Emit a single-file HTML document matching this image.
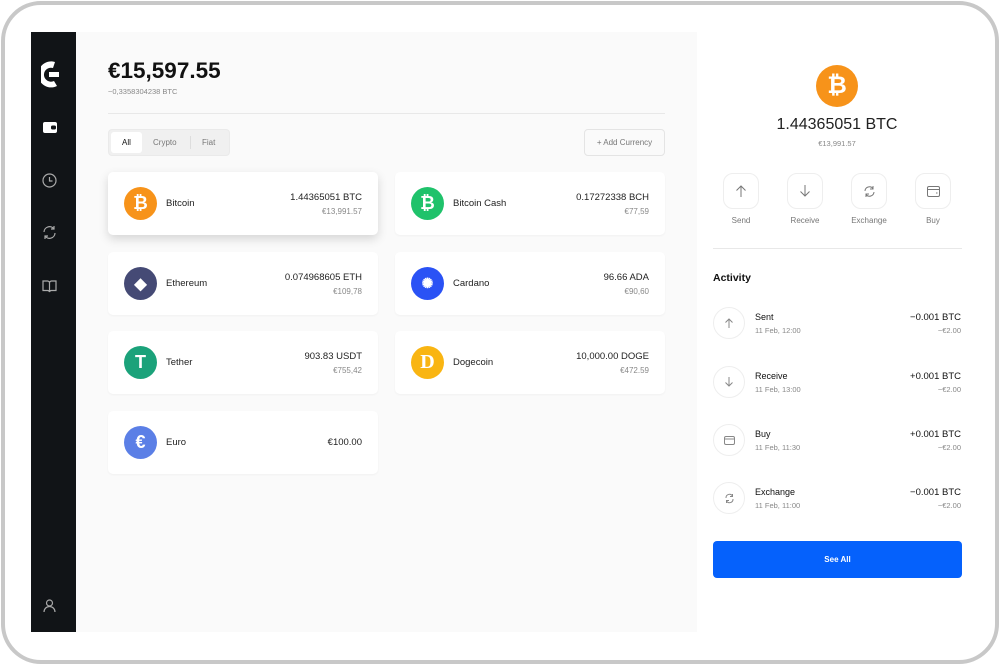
<!DOCTYPE html>
<html><head><meta charset="utf-8"><style>
*{margin:0;padding:0;box-sizing:border-box}
body{width:1000px;height:665px;background:#fff;font-family:"Liberation Sans",sans-serif;position:relative;overflow:hidden;color:#111}
.frame{position:absolute;left:1px;top:1px;width:998px;height:663px;border:4px solid #c8c8c8;border-radius:40px;background:#fff}
.side{position:absolute;left:31px;top:32px;width:45px;height:600px;background:#111417}
.main{position:absolute;left:76px;top:32px;width:621px;height:600px;background:#fafafa}
.right{position:absolute;left:697px;top:32px;width:272px;height:600px;background:#fff}
.a{position:absolute}
.card{position:absolute;width:270px;height:63px;background:#fff;border-radius:5px;box-shadow:0 1px 2px rgba(0,0,0,.04)}
.card.sel{box-shadow:0 4px 10px rgba(0,0,0,.15)}
.ic{position:absolute;left:16px;top:15px;width:33px;height:33px;border-radius:50%;color:#fff;font-weight:bold;font-size:18px;display:flex;align-items:center;justify-content:center}
.nm{position:absolute;left:58px;top:26px;font-size:9.5px;color:#222}
.v1{position:absolute;right:16px;top:20px;font-size:9.5px;text-align:right;color:#222}
.v2{position:absolute;right:16px;top:35px;font-size:8px;color:#888;text-align:right}
.btn{position:absolute;width:36px;height:36px;border:1px solid #eee;border-radius:10px;display:flex;align-items:center;justify-content:center}
.bl{position:absolute;font-size:8px;color:#777;width:60px;text-align:center}
.act .c{position:absolute;left:16px;width:32px;height:32px;border:1px solid #eee;border-radius:50%;display:flex;align-items:center;justify-content:center}
</style></head><body>
<div class="frame"></div>
<div class="side">
<svg class="a" style="left:10px;top:28px" width="18" height="30" viewBox="0 0 18 30"><path d="M14 2 A13 13 0 1 0 16 26 L13 21 A7 7 0 1 1 12 8 Z" fill="#fff"/><rect x="8" y="12" width="10" height="5" fill="#fff"/></svg>
<svg class="a" style="left:12px;top:90px" width="14" height="11"><rect x="0" y="0" width="14" height="11" rx="2" fill="#fff"/><rect x="8" y="3.5" width="5" height="4" rx="1.5" fill="#111417"/></svg>
<svg class="a" style="left:11px;top:141px" width="15" height="15" fill="none" stroke="#aaa" stroke-width="1.2"><circle cx="7.5" cy="7.5" r="6.5"/><path d="M7.5 4v4h3"/></svg>
<svg class="a" style="left:11px;top:193px" width="15" height="15" fill="none" stroke="#aaa" stroke-width="1.2"><path d="M2 7a5.5 5.5 0 0 1 10-3M13 8a5.5 5.5 0 0 1-10 3M12 1v3h-3M3 14v-3h3"/></svg>
<svg class="a" style="left:11px;top:248px" width="15" height="13" fill="none" stroke="#aaa" stroke-width="1.2"><path d="M1 1h4.5a2 2 0 0 1 2 2v9a2 2 0 0 0-2-1.5H1zM14 1H9.5a2 2 0 0 0-2 2v9a2 2 0 0 1 2-1.5H14z"/></svg>
<svg class="a" style="left:12px;top:567px" width="13" height="14" fill="none" stroke="#aaa" stroke-width="1.2"><circle cx="6.5" cy="4" r="3"/><path d="M1 13a5.5 5.5 0 0 1 11 0"/></svg>
</div>
<div class="main">
<div class="a" style="left:32px;top:26px;font-size:22.5px;font-weight:bold">€15,597.55</div>
<div class="a" style="left:32px;top:55px;font-size:7.5px;color:#888">~0,3358304238 BTC</div>
<div class="a" style="left:32px;top:81px;width:557px;height:1px;background:#e8e8e8"></div>
<div class="a" style="left:32px;top:97px;width:122px;height:27px;background:#f0f0f0;border-radius:4px;border:1px solid #eaeaea"></div>
<div class="a" style="left:35px;top:100px;width:31px;height:21px;background:#fff;border-radius:3px;font-size:8px;display:flex;align-items:center;justify-content:center">All</div>
<div class="a" style="left:77px;top:106px;font-size:8px;color:#777">Crypto</div>
<div class="a" style="left:114px;top:104px;width:1px;height:13px;background:#ddd"></div>
<div class="a" style="left:126px;top:106px;font-size:8px;color:#777">Fiat</div>
<div class="a" style="left:508px;top:97px;width:81px;height:27px;border:1px solid #e4e4e4;border-radius:4px;font-size:8px;color:#777;display:flex;align-items:center;justify-content:center">+ Add Currency</div>
</div>
<div class="card sel" style="left:108px;top:172px"><div class="ic" style="background:#f7931a">₿</div><div class="nm">Bitcoin</div><div class="v1">1.44365051 BTC</div><div class="v2">€13,991.57</div></div>
<div class="card" style="left:395px;top:172px"><div class="ic" style="background:#1fc26b">₿</div><div class="nm">Bitcoin Cash</div><div class="v1">0.17272338 BCH</div><div class="v2">€77,59</div></div>
<div class="card" style="left:108px;top:252px"><div class="ic" style="background:#454a75;font-size:16px">◆</div><div class="nm">Ethereum</div><div class="v1">0.074968605 ETH</div><div class="v2">€109,78</div></div>
<div class="card" style="left:395px;top:252px"><div class="ic" style="background:#2a52f5;font-size:14px">✺</div><div class="nm">Cardano</div><div class="v1">96.66 ADA</div><div class="v2">€90,60</div></div>
<div class="card" style="left:108px;top:331px"><div class="ic" style="background:#1ba27a">T</div><div class="nm">Tether</div><div class="v1">903.83 USDT</div><div class="v2">€755,42</div></div>
<div class="card" style="left:395px;top:331px"><div class="ic" style="background:#f9b512;font-family:'Liberation Serif',serif;font-size:20px">D</div><div class="nm">Dogecoin</div><div class="v1">10,000.00 DOGE</div><div class="v2">€472.59</div></div>
<div class="card" style="left:108px;top:411px"><div class="ic" style="background:#5b7fe6">€</div><div class="nm">Euro</div><div class="v1" style="top:26px">€100.00</div></div>
<div class="right">
<div class="a" style="left:119px;top:33px;width:42px;height:42px;border-radius:50%;background:#f7931a;color:#fff;font-weight:bold;font-size:24px;display:flex;align-items:center;justify-content:center">₿</div>
<div class="a" style="left:0;width:280px;top:84px;text-align:center;font-size:16px;color:#222">1.44365051 BTC</div>
<div class="a" style="left:0;width:280px;top:107px;text-align:center;font-size:7.5px;color:#888">€13,991.57</div>
<div class="btn" style="left:26px;top:141px"><svg width="12" height="12" fill="none" stroke="#777" stroke-width="1"><path d="M6 12V1M1.5 5.5 6 1l4.5 4.5"/></svg></div>
<div class="btn" style="left:90px;top:141px"><svg width="12" height="12" fill="none" stroke="#777" stroke-width="1"><path d="M6 0v11M1.5 6.5 6 11l4.5-4.5"/></svg></div>
<div class="btn" style="left:154px;top:141px"><svg width="13" height="13" fill="none" stroke="#777" stroke-width="1"><path d="M2 6a4.5 4.5 0 0 1 8-2.5M11 7a4.5 4.5 0 0 1-8 2.5M10 1v3h-3M3 12V9h3"/></svg></div>
<div class="btn" style="left:218px;top:141px"><svg width="13" height="11" fill="none" stroke="#777" stroke-width="1"><rect x=".5" y=".5" width="12" height="10" rx="1.5"/><path d="M.5 3.5h12M9 7h1.5"/></svg></div>
<div class="bl" style="left:14px;top:184px">Send</div>
<div class="bl" style="left:78px;top:184px">Receive</div>
<div class="bl" style="left:142px;top:184px">Exchange</div>
<div class="bl" style="left:206px;top:184px">Buy</div>
<div class="a" style="left:16px;top:216px;width:249px;height:1px;background:#e8e8e8"></div>
<div class="a" style="left:16px;top:240px;font-size:10.5px;font-weight:bold">Activity</div>
<div class="act">
<div class="c" style="top:275px"><svg width="10" height="10" fill="none" stroke="#888"><path d="M5 10V1M1.5 4.5 5 1l3.5 3.5"/></svg></div>
<div class="a" style="left:58px;top:280px;font-size:9px">Sent</div><div class="a" style="left:58px;top:294px;font-size:7.5px;color:#888">11 Feb, 12:00</div>
<div class="a" style="right:8px;top:280px;font-size:9.5px">−0.001 BTC</div><div class="a" style="right:8px;top:294px;font-size:7.5px;color:#888">−€2.00</div>
<div class="c" style="top:334px"><svg width="10" height="10" fill="none" stroke="#888"><path d="M5 0v9M1.5 5.5 5 9l3.5-3.5"/></svg></div>
<div class="a" style="left:58px;top:339px;font-size:9px">Receive</div><div class="a" style="left:58px;top:353px;font-size:7.5px;color:#888">11 Feb, 13:00</div>
<div class="a" style="right:8px;top:339px;font-size:9.5px">+0.001 BTC</div><div class="a" style="right:8px;top:353px;font-size:7.5px;color:#888">−€2.00</div>
<div class="c" style="top:392px"><svg width="11" height="9" fill="none" stroke="#888"><rect x=".5" y=".5" width="10" height="8" rx="1.5"/><path d="M.5 3h10"/></svg></div>
<div class="a" style="left:58px;top:397px;font-size:9px">Buy</div><div class="a" style="left:58px;top:411px;font-size:7.5px;color:#888">11 Feb, 11:30</div>
<div class="a" style="right:8px;top:397px;font-size:9.5px">+0.001 BTC</div><div class="a" style="right:8px;top:411px;font-size:7.5px;color:#888">−€2.00</div>
<div class="c" style="top:450px"><svg width="11" height="11" fill="none" stroke="#888"><path d="M2 5a3.5 3.5 0 0 1 6.5-2M9 6a3.5 3.5 0 0 1-6.5 2M8.5 1v2.5H6M2.5 10V7.5H5"/></svg></div>
<div class="a" style="left:58px;top:455px;font-size:9px">Exchange</div><div class="a" style="left:58px;top:469px;font-size:7.5px;color:#888">11 Feb, 11:00</div>
<div class="a" style="right:8px;top:455px;font-size:9.5px">−0.001 BTC</div><div class="a" style="right:8px;top:469px;font-size:7.5px;color:#888">−€2.00</div>
</div>
<div class="a" style="left:16px;top:509px;width:249px;height:37px;background:#0561fc;border-radius:4px;color:#fff;font-size:8px;font-weight:bold;display:flex;align-items:center;justify-content:center">See All</div>
</div>
</body></html>
